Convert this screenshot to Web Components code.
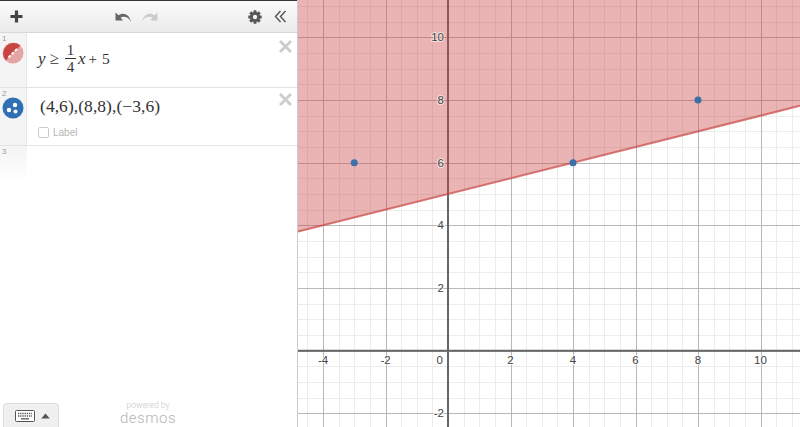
<!DOCTYPE html>
<html>
<head>
<meta charset="utf-8">
<title>Graph</title>
<style>
  html, body { margin: 0; height: 100%; overflow: hidden; background: #fff; }
  body { font-family: "Liberation Serif", serif; }
</style>
</head>
<body>
<calc-app>
  <calc-toolbar slot="list"></calc-toolbar>
  <expr-row slot="list" index="1" kind="ineq" style="height:55px">
    <span class="math" style="display:flex;align-items:center;font:17px 'Liberation Serif',serif;color:#333;margin:4px 0 0 11px">
      <i>y</i><span style="margin:0 6px 0 4px">≥</span>
      <span style="display:inline-flex;flex-direction:column;align-items:center;font-size:15px;line-height:13px;width:11px;margin-right:2px">
        <span style="display:block;width:100%;text-align:center;border-bottom:1px solid #333;padding-bottom:1px">1</span>
        <span style="display:block;padding-top:2px">4</span>
      </span>
      <i>x</i><span style="margin:0 3px 0 3px;font-size:15px">+</span><span style="font-size:15.500px;margin-left:2px">5</span>
    </span>
  </expr-row>
  <expr-row slot="list" index="2" kind="points" style="height:58px">
    <span class="math" style="display:block;font:17.5px 'Liberation Serif',serif;letter-spacing:.05px;color:#333;margin:1px 0 0 13px;white-space:nowrap">(4,6),(8,8),(−3,6)</span>
    <point-label slot="extra">Label</point-label>
  </expr-row>
  <empty-row slot="list" index="3"></empty-row>
  <calc-footer slot="footer"></calc-footer>
  <graph-paper slot="graph"></graph-paper>
</calc-app>

<script>
// Whole page: expression list on the left, graph on the right
class CalcApp extends HTMLElement {
  constructor() {
    super();
    this.attachShadow({ mode: 'open' });
    this.shadowRoot.innerHTML = `
      <style>
        :host { display: grid; grid-template-columns: 298px 1fr; height: 427px; width: 800px; }
        .left {
          display: flex;
          flex-direction: column;
          border-right: 1px solid #ccc;
          box-sizing: border-box;
          height: 427px;
          overflow: hidden;
        }
        .list { display: flex; flex-direction: column; flex: 1; }
        .graph { overflow: hidden; height: 427px; }
      </style>
      <div class="left">
        <div class="list"><slot name="list"></slot></div>
        <slot name="footer"></slot>
      </div>
      <div class="graph"><slot name="graph"></slot></div>
    `;
  }
}

class CalcToolbar extends HTMLElement {
  constructor() {
    super();
    this.attachShadow({ mode: 'open' });
    this.shadowRoot.innerHTML = `
      <style>
        :host {
          display: grid;
          grid-template-columns: 106px auto 1fr;
          align-items: center;
          height: 33px;
          box-sizing: border-box;
          border-top: 1px solid #333;
          border-bottom: 1px solid #d8d8d8;
          background: linear-gradient(#fafafa, #ebebeb);
          padding: 0 10px 0 9px;
        }
        svg { display: block; }
        .mid { display: flex; gap: 9px; }
        .right { display: flex; gap: 12px; justify-content: flex-end; align-items: center; }
      </style>
      <svg width="15" height="15" viewBox="0 0 15 15"><path d="M7.500 1.500v12M1.500 7.500h12" stroke="#444" stroke-width="3.200" fill="none"/></svg>
      <div class="mid">
        <svg width="17" height="12" viewBox="0 0 17 12"><path d="M16 11C14 6 9 4.500 5.500 6.500L8 9.500H.5V1.500L3.400 4.300C8 .8 14.500 3 16 11Z" fill="#666"/></svg>
        <svg width="17" height="12" viewBox="0 0 17 12"><path d="M1 11C3 6 8 4.500 11.500 6.500L9 9.500H16.500V1.500L13.600 4.300C9 .8 2.500 3 1 11Z" fill="#ccc"/></svg>
      </div>
      <div class="right">
        <svg width="14" height="14" viewBox="0 0 14 14"><g fill="#555"><circle cx="7" cy="7" r="5"/><rect x="5.500" y="0.300" width="3" height="13.400" rx=".5"/><rect x="5.500" y="0.300" width="3" height="13.400" rx=".5" transform="rotate(45 7 7)"/><rect x="5.500" y="0.300" width="3" height="13.400" rx=".5" transform="rotate(90 7 7)"/><rect x="5.500" y="0.300" width="3" height="13.400" rx=".5" transform="rotate(135 7 7)"/></g><circle cx="7" cy="7" r="2.200" fill="#f2f2f2"/></svg>
        <svg width="13" height="13" viewBox="0 0 13 13"><path d="M6.500 1L1.500 6.500L6.500 12M11.500 1L6.500 6.500L11.500 12" fill="none" stroke="#555" stroke-width="1.400"/></svg>
      </div>
    `;
  }
}

// One expression row: gutter with number and icon, then the math and a delete cross
class ExprRow extends HTMLElement {
  constructor() {
    super();
    this.attachShadow({ mode: 'open' });
    const kind = this.getAttribute('kind');
    const icon = kind === 'ineq' ? `
      <svg width="22" height="22" viewBox="0 0 22 22">
        <circle cx="11" cy="11" r="10.500" fill="#e5a5a3"/>
        <path d="M3.600 18.400A10.500 10.500 0 0 1 18.400 3.600Z" fill="#c74440"/>
        <path d="M6.500 15.500L15.500 6.500" stroke="#fff" stroke-width="2" stroke-dasharray="3 1.500"/>
      </svg>` : `
      <svg width="22" height="22" viewBox="0 0 22 22">
        <circle cx="11" cy="11" r="10.500" fill="#2d70b3"/>
        <circle cx="7" cy="13" r="2.200" fill="#fff"/>
        <circle cx="13" cy="8" r="2.200" fill="#fff"/>
        <circle cx="13.500" cy="14.500" r="2" fill="#fff"/>
      </svg>`;
    this.shadowRoot.innerHTML = `
      <style>
        :host {
          display: flex;
          box-sizing: border-box;
          border-bottom: 1px solid #e4e4e4;
          background: #fff;
        }
        .gutter {
          width: 27px;
          flex: none;
          box-sizing: border-box;
          background: #f4f4f4;
          border-right: 1px solid #e8e8e8;
          padding: 1px 0 0 2px;
          font: 8px "Liberation Sans", sans-serif;
          color: #999;
        }
        .gutter span { display: block; height: 9px; line-height: 9px; }
        .gutter svg { display: block; margin: -1px 0 0 0; }
        .main { flex: 1; padding-top: 6px; min-width: 0; }
        .top { display: flex; min-height: 34px; }
        :host([kind=ineq]) .top { min-height: 40px; align-items: center; }
        :host([kind=ineq]) .main { padding-top: 4px; }
        :host([kind=points]) .top { min-height: 24px; align-items: center; }
        :host([kind=points]) .gutter svg { margin-top: -1px; }
        .cross { flex: none; display: block; margin: 6px 5px 0 0; align-self: flex-start; }
        :host([kind=ineq]) .cross { margin-top: 3px; }
        :host([kind=points]) .cross { margin-top: -1px; }
        .math { flex: 1; }
      </style>
      <div class="gutter"><span>${this.getAttribute('index')}</span>${icon}</div>
      <div class="main">
        <div class="top">
          <div class="math"><slot></slot></div>
          <svg class="cross" width="13" height="13" viewBox="0 0 13 13"><path d="M1 1L12 12M12 1L1 12" stroke="#ccc" stroke-width="2.800"/></svg>
        </div>
        <slot name="extra"></slot>
      </div>
    `;
  }
}

class PointLabel extends HTMLElement {
  constructor() {
    super();
    this.attachShadow({ mode: 'open' });
    this.shadowRoot.innerHTML = `
      <style>
        :host {
          display: flex;
          align-items: center;
          gap: 4px;
          margin: 9px 0 0 11px;
          font: 10px "Liberation Sans", sans-serif;
          color: #b5b5b5;
        }
        .box {
          width: 9px;
          height: 9px;
          border: 1px solid #ccc;
          border-radius: 2px;
          background: #fff;
        }
      </style>
      <span class="box"></span><slot></slot>
    `;
  }
}

// The last empty row, its gutter fades out downwards
class EmptyRow extends HTMLElement {
  constructor() {
    super();
    this.attachShadow({ mode: 'open' });
    this.shadowRoot.innerHTML = `
      <style>
        :host { display: block; height: 36px; }
        div {
          width: 27px;
          height: 100%;
          box-sizing: border-box;
          padding: 1px 0 0 2px;
          background: linear-gradient(#f4f4f4, #fff);
          font: 8px/9px "Liberation Sans", sans-serif;
          color: #999;
        }
      </style>
      <div>${this.getAttribute('index')}</div>
    `;
  }
}

class CalcFooter extends HTMLElement {
  constructor() {
    super();
    this.attachShadow({ mode: 'open' });
    this.shadowRoot.innerHTML = `
      <style>
        :host {
          display: grid;
          grid-template-columns: 56px 60px;
          align-items: end;
          height: 30px;
          padding-left: 3px;
          column-gap: 59px;
        }
        .keys {
          display: flex;
          align-items: center;
          gap: 6px;
          height: 24px;
          box-sizing: border-box;
          padding: 1px 0 0 11px;
          background: #f0f0f0;
          border: 1px solid #ddd;
          border-bottom: none;
          border-radius: 4px 4px 0 0;
        }
        svg { display: block; }
        .brand {
          text-align: center;
          font-family: Roboto, sans-serif;
          font-weight: 300;
        }
        .by { display: block; font-size: 8.500px; line-height: 10px; height: 10px; color: #c8c8c8; }
        .name { display: block; font-size: 15px; line-height: 17px; height: 17px; color: #b5b5b5; letter-spacing: .5px; }
      </style>
      <div class="keys">
        <svg width="20" height="12" viewBox="0 0 20 12">
          <rect x=".5" y=".5" width="19" height="11" rx="1" fill="#fff" stroke="#555"/>
          <path d="M3 3.500h14M3 6h14" stroke="#555" stroke-width="1.300" stroke-dasharray="1.300 .9"/>
          <path d="M6 8.800h8" stroke="#555" stroke-width="1.300"/>
        </svg>
        <svg width="9" height="6" viewBox="0 0 9 6"><path d="M4.500 .5L8.800 5.500H.2Z" fill="#555"/></svg>
      </div>
      <div class="brand"><span class="by">powered by</span><span class="name">desmos</span></div>
    `;
  }
}

// Graph drawn into one svg: grid, shaded inequality, axes, labels, points
class GraphPaper extends HTMLElement {
  constructor() {
    super();
    this.attachShadow({ mode: 'open' });
    const w = 502, h = 427;
    const ox = 150, oy = 350.7, sx = 31.25, sy = 31.33;
    const X = v => ox + v * sx;
    const Y = v => oy - v * sy;
    let minor = '', major = '', labels = '';
    for (let v = -5; v <= 12; v += 0.5) {
      const x = Math.round(X(v)) + 0.5;
      if (x < 0 || x > w) continue;
      if (v % 2 === 0) major += `M${x} 0V${h}`;
      else minor += `M${x} 0V${h}`;
    }
    for (let v = -3; v <= 12; v += 0.5) {
      const y = Math.round(Y(v)) + 0.5;
      if (y < 0 || y > h) continue;
      if (v % 2 === 0) major += `M0 ${y}H${w}`;
      else minor += `M0 ${y}H${w}`;
    }
    for (const v of [-4, -2, 2, 4, 6, 8, 10]) {
      labels += `<text x="${X(v)}" y="${oy + 13}" text-anchor="middle">${v}</text>`;
    }
    labels += `<text x="${ox - 5}" y="${oy + 13}" text-anchor="end">0</text>`;
    for (const v of [-2, 2, 4, 6, 8, 10]) {
      labels += `<text x="${ox - 4}" y="${Y(v) + 4}" text-anchor="end">${v}</text>`;
    }
    const yAt = x => Y((x - ox) / sx / 4 + 5);
    const line = `M0 ${yAt(0)}L${w} ${yAt(w)}`;
    const dots = [[4, 6], [8, 8], [-3, 6]]
      .map(p => `<circle cx="${X(p[0])}" cy="${Y(p[1])}" r="3.500" fill="#3d6fa8"/>`).join('');
    this.shadowRoot.innerHTML = `
      <style>
        :host { display: block; width: ${w}px; height: ${h}px; background: #fff; }
        svg { display: block; }
        text {
          font: 11.500px "Liberation Sans", sans-serif;
          fill: #444;
          stroke: rgba(255,255,255,.6);
          stroke-width: 2px;
          paint-order: stroke;
        }
      </style>
      <svg width="${w}" height="${h}" viewBox="0 0 ${w} ${h}">
        <path d="${minor}" stroke="#ececec" fill="none"/>
        <path d="${major}" stroke="#b8b8b8" fill="none"/>
        <path d="M${ox} 0V${h}M0 ${oy}H${w}" stroke="#666" stroke-width="2" fill="none"/>
        <path d="${line}L${w} 0L0 0Z" fill="#c74440" fill-opacity=".4"/>
        <path d="${line}" stroke="#c74440" stroke-opacity=".7" stroke-width="2" fill="none"/>
        ${labels}
        ${dots}
      </svg>
    `;
  }
}

customElements.define('calc-app', CalcApp);
customElements.define('calc-toolbar', CalcToolbar);
customElements.define('expr-row', ExprRow);
customElements.define('point-label', PointLabel);
customElements.define('empty-row', EmptyRow);
customElements.define('calc-footer', CalcFooter);
customElements.define('graph-paper', GraphPaper);
</script>
</body>
</html>
